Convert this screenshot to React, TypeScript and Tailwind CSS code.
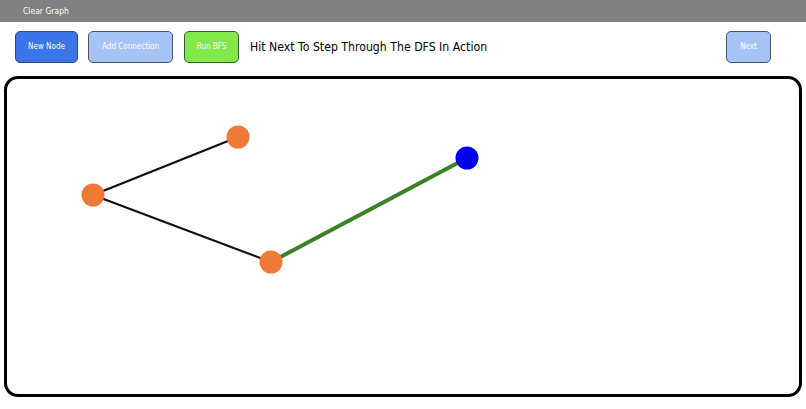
import React from "react";

const nodes = [
  { x: 238, y: 137, c: "#ee7a35" },
  { x: 93, y: 195, c: "#ee7a35" },
  { x: 271, y: 262, c: "#ee7a35" },
  { x: 467, y: 158, c: "#0000ee" },
];

export default function App() {
  const ox = 7;
  const oy = 79;
  return (
    <div className="w-[806px] h-[409px] bg-white overflow-hidden" style={{ fontFamily: "'DejaVu Sans Condensed', 'DejaVu Sans', sans-serif" }}>
      <div className="h-[22px] bg-[#808080] flex items-center pl-[23px]">
        <span className="text-white text-[8.5px]">Clear Graph</span>
      </div>
      <div className="flex items-center h-[32px] mt-[9px] pl-[15px] pr-[35px]">
        <button className="w-[63px] h-[32px] rounded-[5px] border border-[#3a4a66] bg-[#3c74ea] text-white text-[8px]">New Node</button>
        <button className="ml-[10px] w-[85px] h-[32px] rounded-[5px] border border-[#4b5568] bg-[#a6c3f5] text-white text-[8px]">Add Connection</button>
        <button className="ml-[11px] w-[55px] h-[32px] rounded-[5px] border border-[#3b5a2c] bg-[#82e84c] text-white text-[8px]">Run BFS</button>
        <span className="ml-[11px] text-[12.2px] text-black">Hit Next To Step Through The DFS In Action</span>
        <button className="ml-auto w-[45px] h-[32px] rounded-[5px] border border-[#4b5568] bg-[#a6c3f5] text-white text-[8px]">Next</button>
      </div>
      <div className="mt-[13px] ml-[4px] w-[798px] h-[321px] border-[3px] border-black rounded-[14px] relative">
        <svg className="absolute inset-0" width="792" height="315">
          <line x1={93 - ox} y1={195 - oy} x2={238 - ox} y2={137 - oy} stroke="#111" strokeWidth="2.2" />
          <line x1={93 - ox} y1={195 - oy} x2={271 - ox} y2={262 - oy} stroke="#111" strokeWidth="2.2" />
          <line x1={271 - ox} y1={262 - oy} x2={467 - ox} y2={158 - oy} stroke="#3b8128" strokeWidth="4" />
          {nodes.map((n, i) => (
            <circle key={i} cx={n.x - ox} cy={n.y - oy} r="11.5" fill={n.c} />
          ))}
        </svg>
      </div>
    </div>
  );
}
